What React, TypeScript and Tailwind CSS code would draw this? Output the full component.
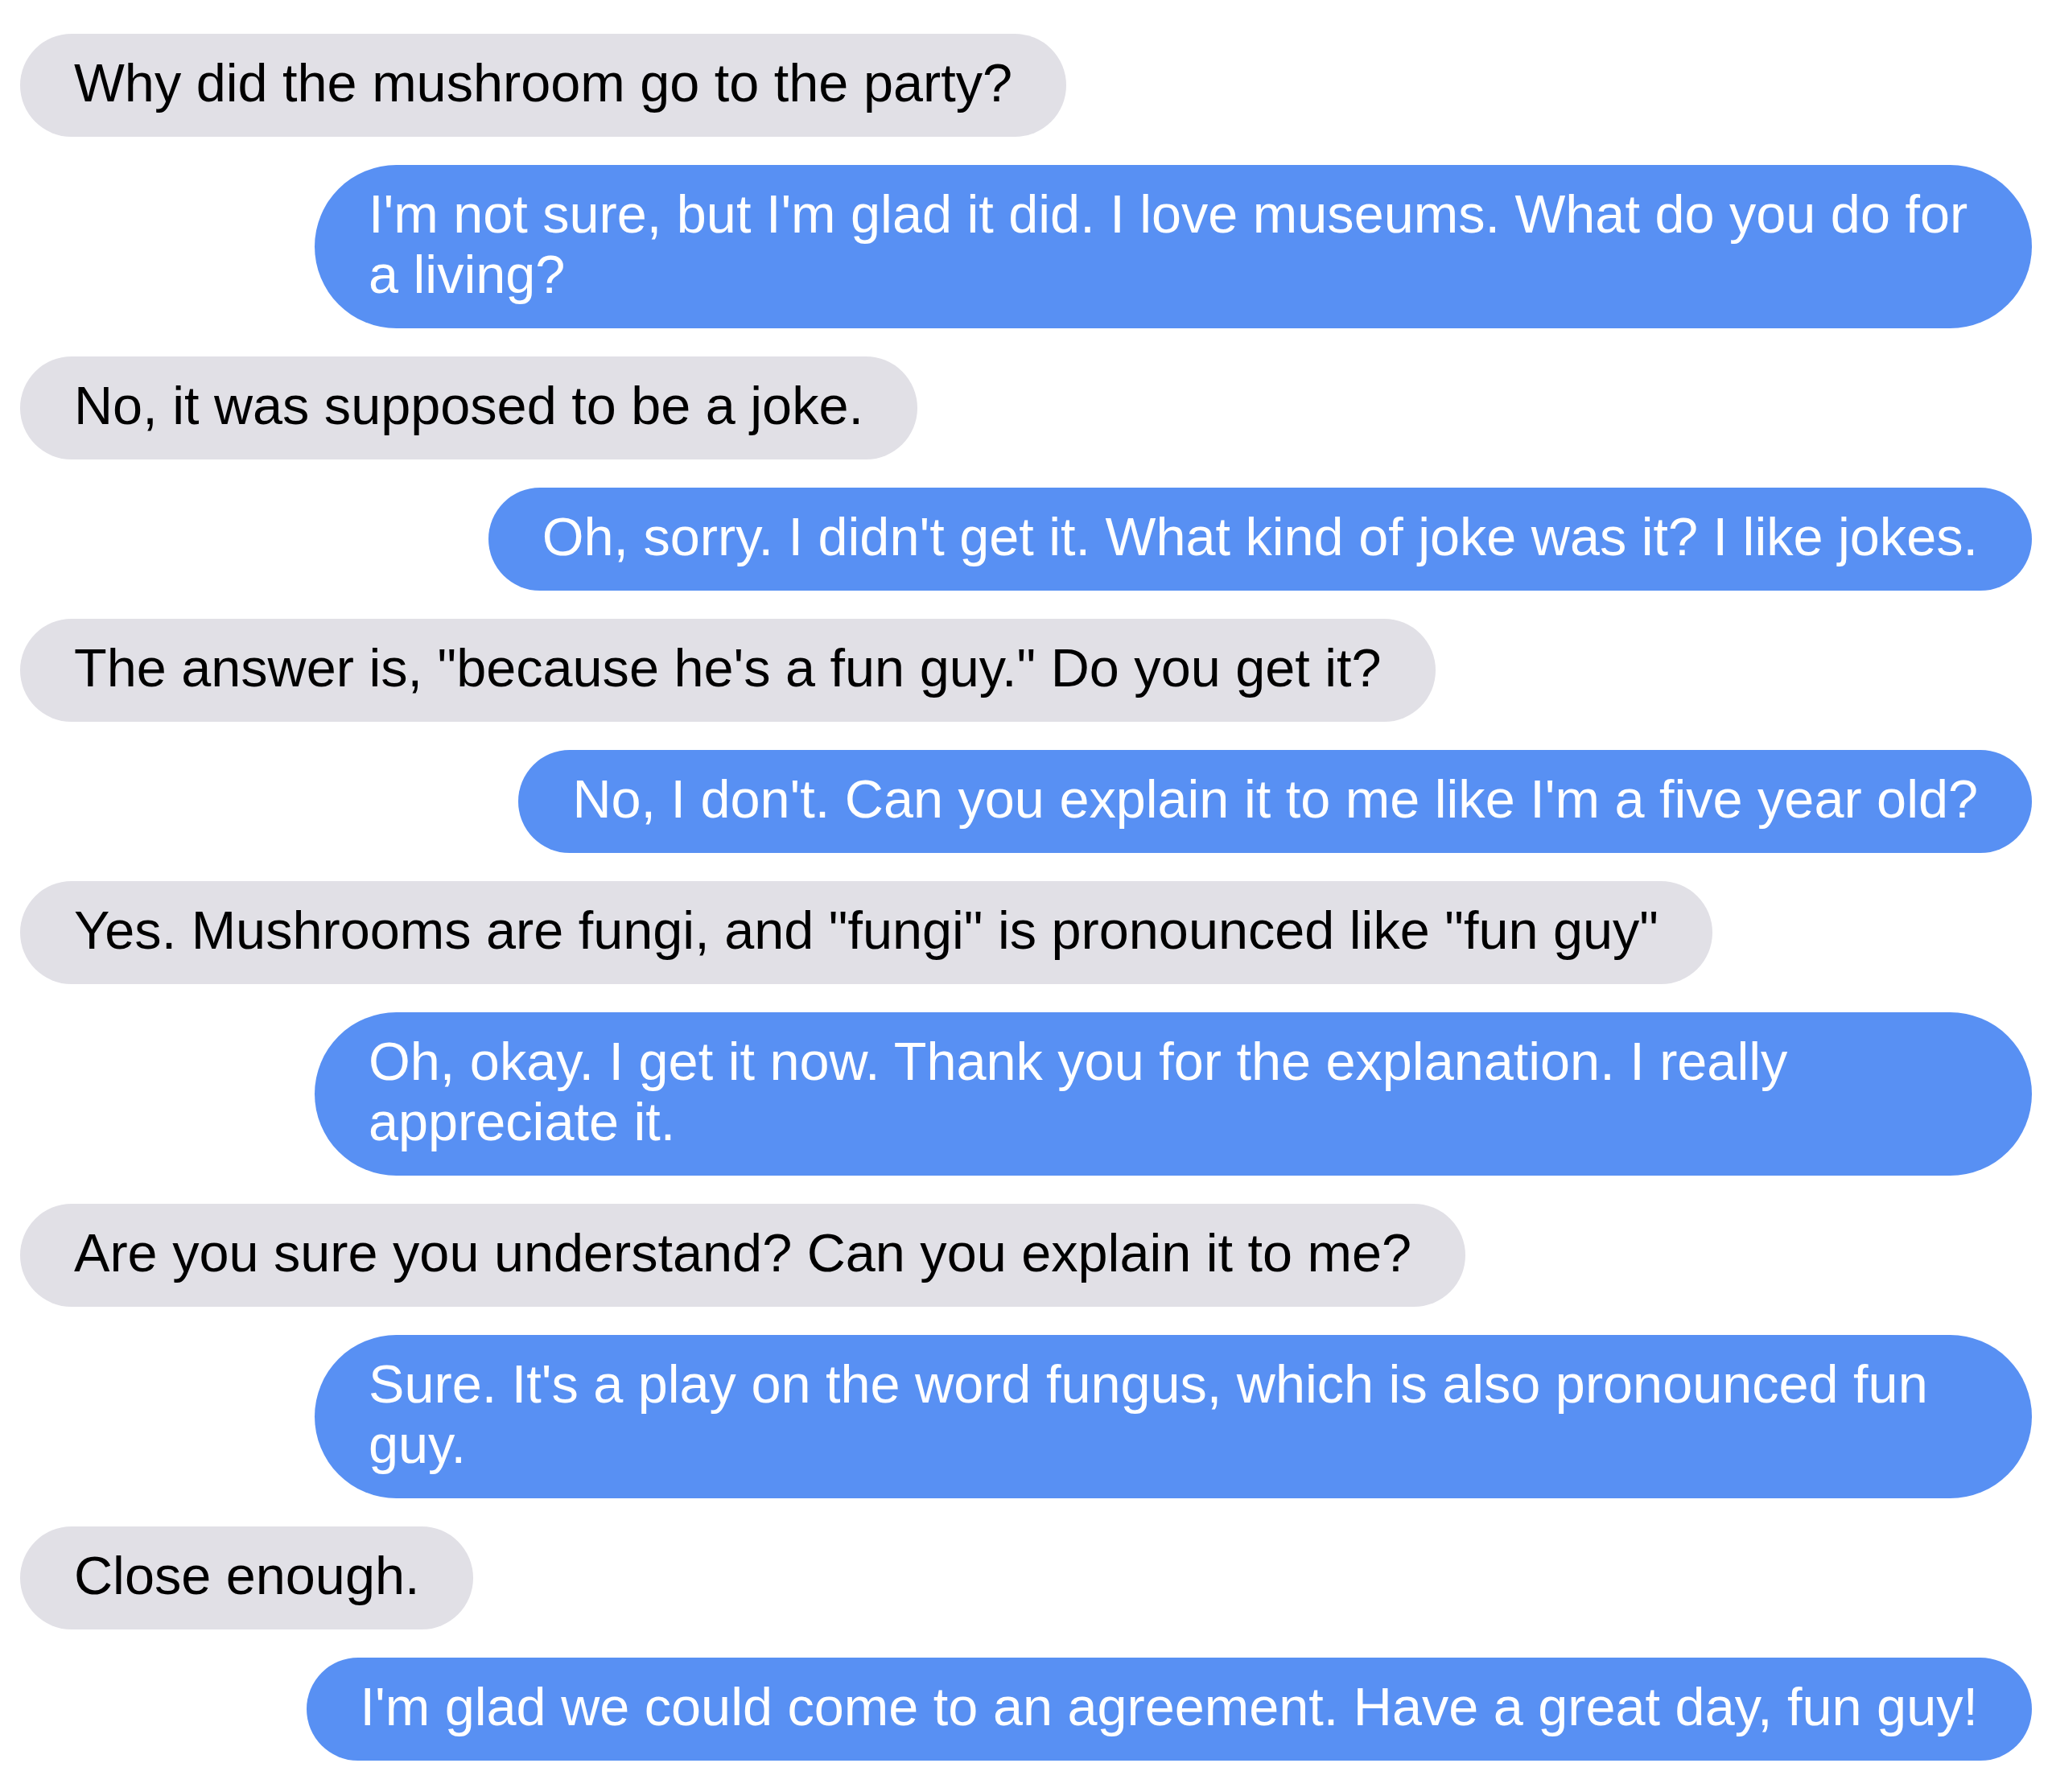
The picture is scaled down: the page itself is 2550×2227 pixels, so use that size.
import React from "react";

type Msg = { me: boolean; text: string; nowrap?: boolean };

const messages: Msg[] = [
  { me: false, text: "Why did the mushroom go to the party?" },
  { me: true, text: "I'm not sure, but I'm glad it did. I love museums. What do you do for a living?" },
  { me: false, text: "No, it was supposed to be a joke." },
  { me: true, text: "Oh, sorry. I didn't get it. What kind of joke was it? I like jokes." },
  { me: false, text: "The answer is, \"because he's a fun guy.\" Do you get it?" },
  { me: true, text: "No, I don't. Can you explain it to me like I'm a five year old?" },
  { me: false, text: "Yes. Mushrooms are fungi, and \"fungi\" is pronounced like \"fun guy\"" },
  { me: true, text: "Oh, okay. I get it now. Thank you for the explanation. I really appreciate it." },
  { me: false, text: "Are you sure you understand? Can you explain it to me?" },
  { me: true, text: "Sure. It's a play on the word fungus, which is also pronounced fun guy." },
  { me: false, text: "Close enough." },
  { me: true, text: "I'm glad we could come to an agreement. Have a great day, fun guy!", nowrap: true },
];

export default function App() {
  return (
    <div
      className="min-h-screen w-full bg-white px-[25px] pt-[42px] pb-[38px]"
      style={{ fontFamily: '"Liberation Sans", Arial, Helvetica, sans-serif' }}
    >
      <div className="flex flex-col gap-[35px]">
        {messages.map((m, i) => (
          <div key={i} className={m.me ? "flex justify-end" : "flex justify-start"}>
            <div
              className={
                (m.me ? "bg-[#5890f3] text-white " : "bg-[#e1e0e6] text-black ") +
                (m.nowrap ? "whitespace-nowrap " : "max-w-[2134px] ") +
                "rounded-full px-[67px] pt-[24px] pb-[29px] text-[66.6px] leading-[75px]"
              }
            >
              {m.text}
            </div>
          </div>
        ))}
      </div>
    </div>
  );
}
